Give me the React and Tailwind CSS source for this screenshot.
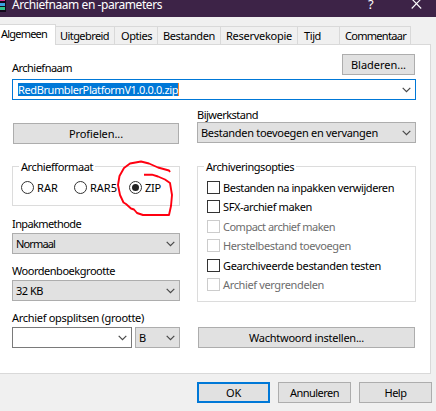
import { useLayoutEffect, useRef, useState } from "react";

// Single line of text whose tracking is adjusted so that it spans `w` pixels.
function T({ w, children, className = "" }) {
  const ref = useRef(null);
  const [ls, setLs] = useState(0);
  useLayoutEffect(() => {
    const natural = ref.current.getBoundingClientRect().width;
    setLs((w - natural) / children.length);
  }, [w, children]);
  return (
    <span className={"block h-[15px] shrink-0 whitespace-nowrap leading-[15px] " + className}>
      <span ref={ref} style={{ letterSpacing: ls + "px" }}>{children}</span>
    </span>
  );
}

function Chevron() {
  return (
    <svg width="9" height="6" viewBox="0 0 9 6" className="shrink-0">
      <path d="M0.7 0.8 L4.5 4.6 L8.3 0.8" fill="none" stroke="#484848" strokeWidth="1.2" />
    </svg>
  );
}

function Button({ w, children, className = "" }) {
  return (
    <button className={"flex h-[21px] items-center justify-center border border-[#adadad] bg-[#e1e1e1] " + className}>
      <T w={w}>{children}</T>
    </button>
  );
}

function Select({ w, children, className = "" }) {
  return (
    <div className={"flex h-[21px] items-center justify-between border border-[#adadad] bg-[#e1e1e1] pr-1 pl-[3px] " + className}>
      <T w={w}>{children}</T>
      <Chevron />
    </div>
  );
}

function Group({ title, w, className = "", children }) {
  return (
    <div className={"relative border border-[#dcdcdc] " + className}>
      <div className="absolute -top-[8px] left-[6px] bg-white px-[2px]">
        <T w={w}>{title}</T>
      </div>
      {children}
    </div>
  );
}

function Radio({ w, checked, label, className = "" }) {
  return (
    <div className={"flex items-center " + className}>
      <span className="mr-[3px] flex size-[13px] items-center justify-center rounded-full border border-[#333]">
        {checked && <span className="size-[7px] rounded-full bg-[#222]" />}
      </span>
      <T w={w}>{label}</T>
    </div>
  );
}

function Check({ w, label, disabled, className = "" }) {
  return (
    <div className={"flex h-[15px] items-center " + (disabled ? "text-[#6d6d6d] " : "") + className}>
      <span className={"mr-[3px] size-[13px] border " + (disabled ? "border-[#cccccc]" : "border-[#333]")} />
      <T w={w}>{label}</T>
    </div>
  );
}

function Tab({ w, children, className = "" }) {
  return (
    <div className={"h-[18px] border-t border-r border-[#d9d9d9] pt-px " + className}>
      <T w={w}>{children}</T>
    </div>
  );
}

export default function App() {
  return (
    <div className="flex h-[411px] w-[436px] flex-col overflow-hidden bg-[#f0f0f0] font-['Noto_Sans',sans-serif] text-[11px] text-black">
      <header className="flex h-[17px] shrink-0 items-start bg-[#3d2347] text-white">
        <svg width="6" height="12" viewBox="0 0 6 12" className="shrink-0">
          <path d="M0 0H6V12H0z" fill="#12081a" />
          <path d="M0 0H5V1H0z" fill="#d6318f" />
          <path d="M0 3H5V6H0z" fill="#3aa0e0" />
          <path d="M0 7H5V10H0z" fill="#30c48c" />
        </svg>
        <T w={150} className="-mt-[3px] ml-[6px] text-[12px]">Archiefnaam en -parameters</T>
        <T w={6} className="-mt-[3px] ml-[206px] text-[13px]">?</T>
        <svg width="11" height="9" viewBox="0 0 11 9" className="ml-[37px]">
          <path d="M0.7 -1.2 L10.2 8.5 M10.2 -1.2 L0.7 8.5" stroke="#fff" strokeWidth="1.1" fill="none" />
        </svg>
      </header>

      <nav className="flex h-[28px] shrink-0 items-end pt-[7px]">
        <div className="h-[21px] w-[56px] border-t border-r border-[#d9d9d9] bg-white pt-px pl-px">
          <T w={46}>Algemeen</T>
        </div>
        <div className="flex h-[19px] w-[375px] border-b border-[#d9d9d9]">
          <Tab w={49} className="w-[59px] pl-[4px]">Uitgebreid</Tab>
          <Tab w={31} className="w-[43px] pl-[6px]">Opties</Tab>
          <Tab w={52} className="w-[63px] pl-[5px]">Bestanden</Tab>
          <Tab w={66} className="w-[77px] pl-[5px]">Reservekopie</Tab>
          <Tab w={17} className="w-[42px] pl-[6px]">Tijd</Tab>
          <Tab w={61} className="w-[71px] pl-[5px]">Commentaar</Tab>
        </div>
      </nav>

      <main className="flex h-[329px] w-[431px] shrink-0 flex-col border-r border-b border-[#d9d9d9] bg-white pt-[9px] pl-[12px]">
        <div className="flex h-[21px] w-[403px] justify-between">
          <T w={60} className="mt-[6px]">Archiefnaam</T>
          <Button w={55} className="w-[73px]">Bladeren...</Button>
        </div>
        <div className="mt-[4px] flex h-[21px] w-[404px] shrink-0 items-center justify-between border border-[#0078d7] pr-1 pl-[5px]">
          <div className="h-[13px] border-r border-[#ff8728] bg-[#0078d7] text-white">
            <T w={160} className="-mt-px">RedBrumblerPlatformV1.0.0.0.zip</T>
          </div>
          <Chevron />
        </div>

        <div className="flex gap-[17px]">
          <section className="flex w-[168px] flex-col pt-[23px]">
            <Button w={54} className="ml-px w-[166px]">Profielen...</Button>
            <Group title="Archiefformaat" w={72} className="mt-[22px] h-[40px]">
              <div className="flex pt-[13px] pl-[8px]">
                <Radio label="RAR" w={21} className="w-[53px]" />
                <Radio label="RAR5" w={27} className="w-[55px]" />
                <Radio label="ZIP" w={16} checked />
              </div>
              <svg width="60" height="60" viewBox="115 158 60 60" className="absolute top-[-9px] left-[102px]">
                <path
                  d="M170 172 L169 170.5 L158 167.5 L149 163.5 L141 161.5 L130 163.5 L124 168 L119.5 176 L118 185 L120 195 L123.5 202.5 L126 204 L131 208.5 L134 209.5 L137 213 L143 215 L169 215 L171 206 L172 195 L170 183 L165 179.5 L158 176.5 L152 174.7 L144 174.7"
                  fill="none" stroke="#ff0010" strokeWidth="1.9" strokeLinejoin="round" />
              </svg>
            </Group>
            <T w={69} className="mt-[10px]">Inpakmethode</T>
            <Select w={39} className="mt-[2px]">Normaal</Select>
            <T w={103} className="mt-[9px]">Woordenboekgrootte</T>
            <Select w={27} className="mt-[2px]">32 KB</Select>
            <T w={132} className="mt-[9px]">Archief opsplitsen (grootte)</T>
            <div className="mt-[2px] flex gap-[3px]">
              <div className="flex h-[21px] w-[120px] items-center justify-end border border-[#7a7a7a] bg-white pr-1">
                <Chevron />
              </div>
              <Select w={7} className="w-[45px]">B</Select>
            </div>
          </section>

          <section className="flex w-[219px] flex-col pt-[7px]">
            <T w={61}>Bijwerkstand</T>
            <Select w={177}>Bestanden toevoegen en vervangen</Select>
            <Group title="Archiveringsopties" w={88} className="mt-[23px] h-[136px]">
              <div className="flex flex-col pt-[13px] pl-[9px]">
                <Check w={171} label="Bestanden na inpakken verwijderen" />
                <Check w={89} label="SFX-archief maken" className="mt-[4px]" />
                <Check w={112} label="Compact archief maken" disabled className="mt-[5px]" />
                <Check w={128} label="Herstelbestand toevoegen" disabled className="mt-[4px]" />
                <Check w={158} label="Gearchiveerde bestanden testen" className="mt-[5px]" />
                <Check w={101} label="Archief vergrendelen" disabled className="mt-[4px]" />
              </div>
            </Group>
            <Button w={115} className="mt-[25px] ml-px w-[217px]">Wachtwoord instellen...</Button>
          </section>
        </div>
      </main>

      <footer className="flex gap-[8px] pt-[8px] pl-[197px]">
        <button className="flex h-[21px] w-[73px] items-center justify-center border-2 border-[#0078d7] bg-[#e1e1e1]">
          <T w={15}>OK</T>
        </button>
        <Button w={49} className="w-[73px]">Annuleren</Button>
        <Button w={22} className="w-[73px]">Help</Button>
      </footer>
    </div>
  );
}
